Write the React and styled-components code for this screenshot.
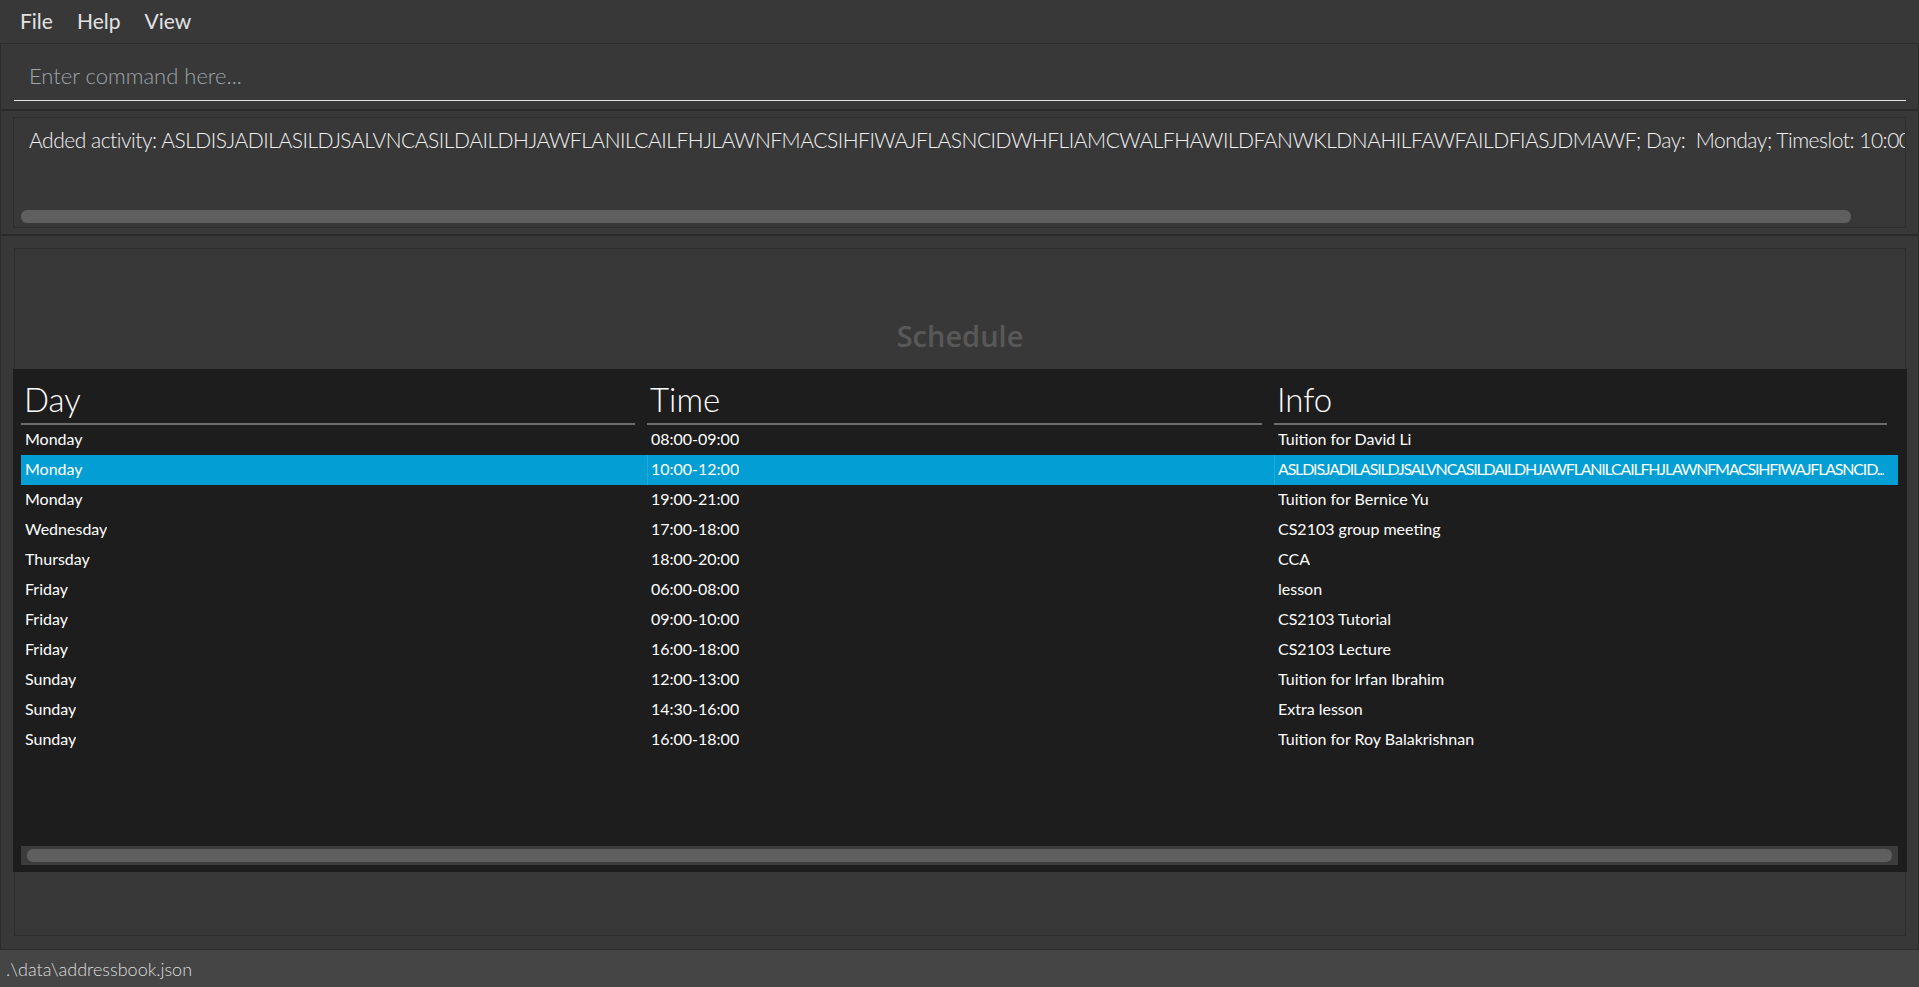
import React from 'react'
import styled, { createGlobalStyle } from 'styled-components'

const GlobalStyle = createGlobalStyle`
  html, body {
    margin: 0;
    padding: 0;
    background: #383838;
    overflow: hidden;
  }
  * {
    box-sizing: border-box;
  }
`

const Window = styled.div`
  display: flex;
  flex-direction: column;
  width: 1919px;
  height: 987px;
  background: #383838;
  font-family: Lato, "Liberation Sans", sans-serif;
  color: #f2f2f2;
`

const MenuBar = styled.div`
  display: flex;
  align-items: center;
  height: 43px;
  padding: 0 0 2px 8px;
  flex-shrink: 0;
`

const MenuItem = styled.span`
  font-size: 21px;
  color: #e2e2e2;
  padding: 0 12px;
`

const Pane = styled.div`
  border: 1px solid #2b2b2b;
  flex-shrink: 0;
`

const CommandPane = styled(Pane)`
  height: 67px;
  padding: 7px 12px 0 13px;
`

const CommandInput = styled.input`
  display: block;
  width: 100%;
  height: 50px;
  padding: 0 0 0 15px;
  background: transparent;
  border: none;
  border-bottom: 1px solid #e6e6e6;
  outline: none;
  font-family: Lato, "Liberation Sans", sans-serif;
  font-weight: 300;
  font-size: 22px;
  color: #f2f2f2;

  &::placeholder {
    color: #9ea4aa;
  }
`

const ResultPane = styled(Pane)`
  height: 125px;
  padding: 6px 12px 0 12px;
`

const ResultBox = styled.div`
  display: flex;
  flex-direction: column;
  height: 111px;
  border: 1px solid #2d2d2d;
  overflow: hidden;
`

const ResultText = styled.div`
  padding: 9px 0 0 15px;
  font-weight: 300;
  font-size: 21px;
  letter-spacing: -0.48px;
  white-space: nowrap;
  overflow: hidden;
  flex: 1;
`

const Thumb = styled.div`
  height: 13px;
  width: ${(p) => p.$width};
  margin: ${(p) => p.$margin};
  background: #5f5f5f;
  border-radius: 6px;
`

const SchedulePane = styled(Pane)`
  flex: 1;
  padding: 12px 12px 13px 13px;
  display: flex;
`

const ScheduleBox = styled.div`
  flex: 1;
  display: flex;
  flex-direction: column;
  border: 1px solid #2d2d2d;
`

const TitleArea = styled.div`
  height: 120px;
  padding-top: 68px;
  text-align: center;
  font-family: "Open Sans", "Liberation Sans", sans-serif;
  font-weight: 600;
  font-size: 29px;
  line-height: 1.3;
  color: #585858;
  flex-shrink: 0;
`

const Table = styled.div`
  display: flex;
  flex-direction: column;
  height: 503px;
  margin: 0 -2px;
  padding: 0 9px 7px 8px;
  background: #1d1d1d;
  flex-shrink: 0;
`

const Columns = styled.div`
  display: grid;
  grid-template-columns: 614px 615px 1fr;
  column-gap: 12px;
`

const HeaderRow = styled(Columns)`
  padding-right: 11px;
`

const HeaderCell = styled.div`
  height: 56px;
  padding: 10px 0 0 3px;
  border-bottom: 2px solid #6c6c6c;
  font-weight: 300;
  font-size: 33px;
  color: #ffffff;
`

const Row = styled(Columns)`
  height: 30px;
  background: ${(p) => (p.$selected ? '#039ed3' : 'transparent')};
`

const Cell = styled.div`
  display: flex;
  align-items: center;
  min-width: 0;
  padding: 0 6px 3px 3px;
  font-size: 16px;
  color: #ffffff;
  border-left: 1px solid
    ${(p) => (p.$selected && !p.$first ? 'rgba(255,255,255,0.12)' : 'transparent')};
`

const CellText = styled.span`
  white-space: nowrap;
  overflow: hidden;
  text-overflow: ellipsis;
  letter-spacing: ${(p) => (p.$tight ? '-1.2px' : 'normal')};
`

const Filler = styled.div`
  flex: 1;
`

const Track = styled.div`
  height: 19px;
  padding: 3px 6px;
  background: #3c3c3c;
`

const BoxFiller = styled.div`
  flex: 1;
`

const StatusBar = styled.div`
  height: 37px;
  display: flex;
  align-items: center;
  padding-left: 6px;
  background: #454545;
  font-size: 18px;
  font-weight: 300;
  color: #dedede;
  flex-shrink: 0;
`

const longName =
  'ASLDISJADILASILDJSALVNCASILDAILDHJAWFLANILCAILFHJLAWNFMACSIHFIWAJFLASNCIDWHFLIAMCWALFHAWILDFANWKLDNAHILFAWFAILDFIASJDMAWF'

const activities = [
  ['Monday', '08:00-09:00', 'Tuition for David Li'],
  ['Monday', '10:00-12:00', 'ASLDISJADILASILDJSALVNCASILDAILDHJAWFLANILCAILFHJLAWNFMACSIHFIWAJFLASNCID...', true],
  ['Monday', '19:00-21:00', 'Tuition for Bernice Yu'],
  ['Wednesday', '17:00-18:00', 'CS2103 group meeting'],
  ['Thursday', '18:00-20:00', 'CCA'],
  ['Friday', '06:00-08:00', 'lesson'],
  ['Friday', '09:00-10:00', 'CS2103 Tutorial'],
  ['Friday', '16:00-18:00', 'CS2103 Lecture'],
  ['Sunday', '12:00-13:00', 'Tuition for Irfan Ibrahim'],
  ['Sunday', '14:30-16:00', 'Extra lesson'],
  ['Sunday', '16:00-18:00', 'Tuition for Roy Balakrishnan'],
]

export default function App() {
  return (
    <Window>
      <GlobalStyle />
      <MenuBar>
        <MenuItem>File</MenuItem>
        <MenuItem>Help</MenuItem>
        <MenuItem>View</MenuItem>
      </MenuBar>

      <CommandPane>
        <CommandInput placeholder="Enter command here..." />
      </CommandPane>

      <ResultPane>
        <ResultBox>
          <ResultText>
            Added activity: {longName}; Day:&nbsp; Monday; Timeslot: 10:00-12:00
          </ResultText>
          <Thumb $width="1830px" $margin="0 0 4px 7px" />
        </ResultBox>
      </ResultPane>

      <SchedulePane>
        <ScheduleBox>
          <TitleArea>Schedule</TitleArea>
          <Table>
            <HeaderRow>
              <HeaderCell>Day</HeaderCell>
              <HeaderCell>Time</HeaderCell>
              <HeaderCell>Info</HeaderCell>
            </HeaderRow>
            {activities.map(([day, time, info, selected], i) => (
              <Row key={i} $selected={selected}>
                <Cell $first $selected={selected}>
                  <CellText>{day}</CellText>
                </Cell>
                <Cell $selected={selected}>
                  <CellText>{time}</CellText>
                </Cell>
                <Cell $selected={selected}>
                  <CellText $tight={info.length > 40}>{info}</CellText>
                </Cell>
              </Row>
            ))}
            <Filler />
            <Track>
              <Thumb $width="100%" $margin="0" />
            </Track>
          </Table>
          <BoxFiller />
        </ScheduleBox>
      </SchedulePane>

      <StatusBar>.\data\addressbook.json</StatusBar>
    </Window>
  )
}
